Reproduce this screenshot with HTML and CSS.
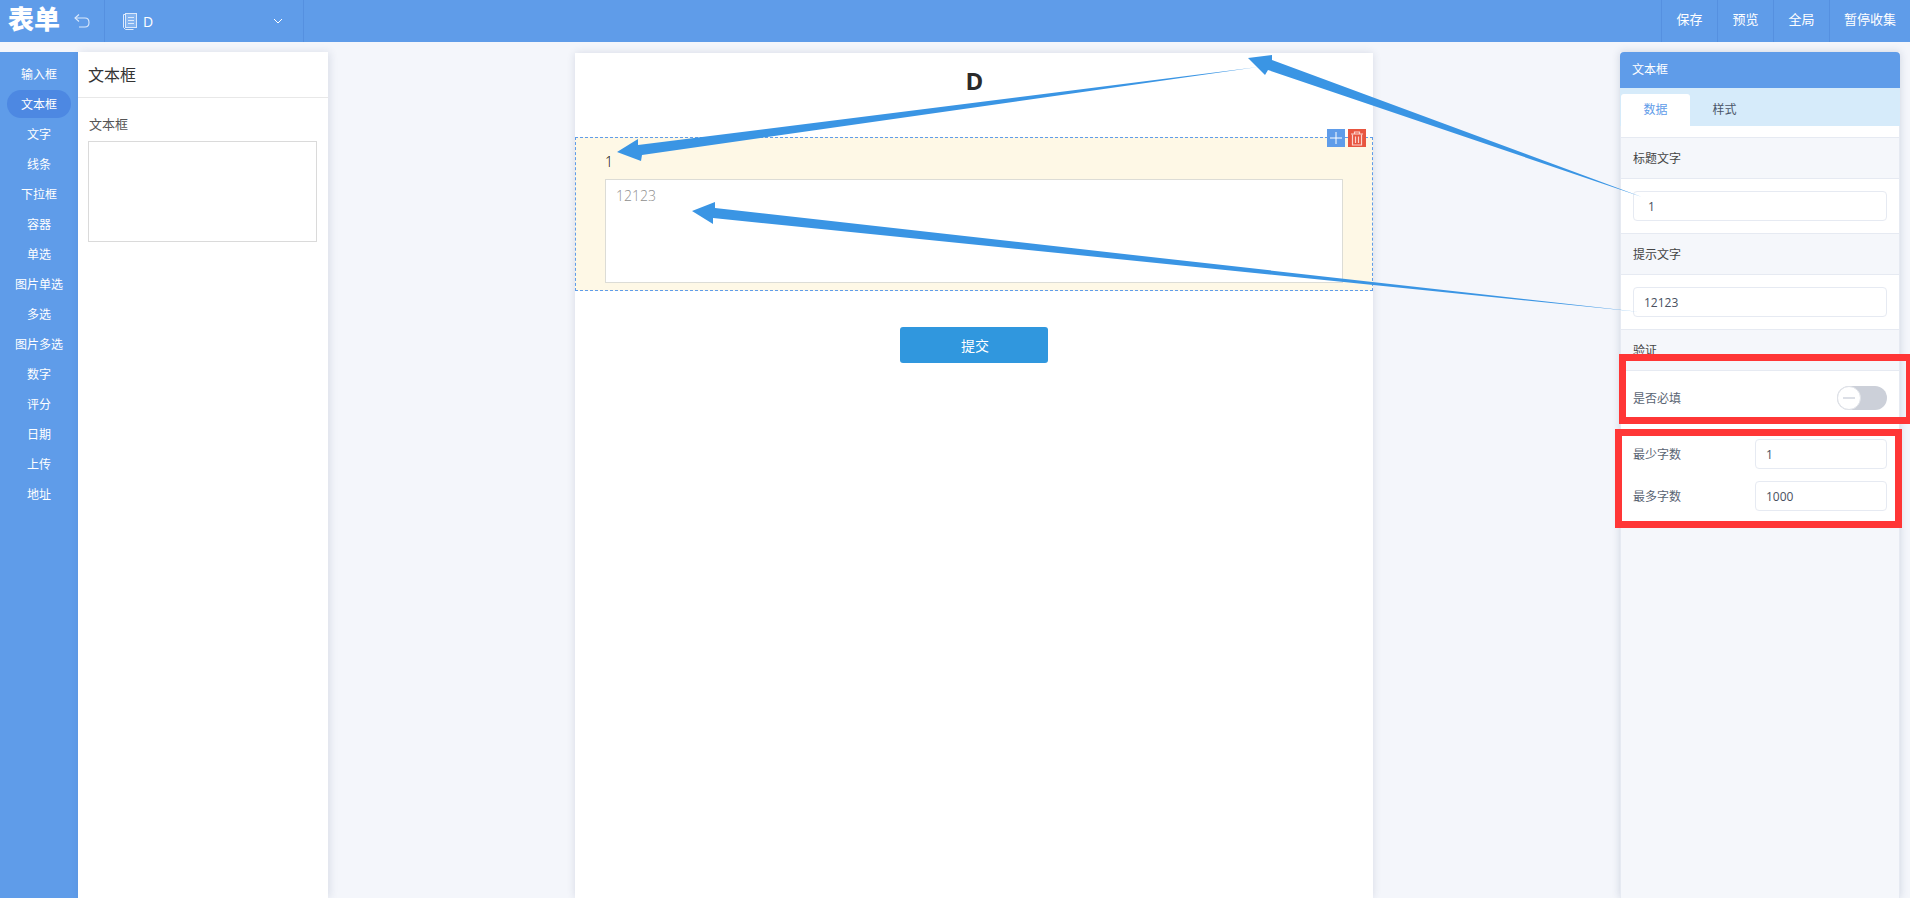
FILE: index.html
```html
<!DOCTYPE html>
<html lang="zh-CN">
<head>
    <meta charset="UTF-8">
    <meta name="viewport" content="width=device-width, initial-scale=1.0">
    <title>表单</title>
    <link rel="stylesheet" href="styles.css">
</head>
<body>
    <!-- Top bar -->
    <header class="topbar">
        <div class="logo">表单</div>
        <div class="undo">
            <svg width="16" height="14" viewBox="0 0 16 14" fill="none" stroke="#dce9fb" stroke-width="1.1">
                <path d="M5 .5 1 4l4 3.5"/>
                <path d="M1 4h10c2.500 0 4 1.800 4 4.500S13.500 13 11 13H5"/>
            </svg>
        </div>
        <div class="form-select">
            <svg class="doc-icon" width="15" height="17" viewBox="0 0 15 17" fill="none" stroke="#dce9fb">
                <path d="M3 1.500h-1.500v13l2 2h8"/>
                <rect x="3.500" y=".5" width="11" height="14" fill="#84b4f0"/>
                <path d="M6 4.500h6M6 7.500h6M6 10.500h6"/>
            </svg>
            <span class="form-name">D</span>
            <svg class="chevron" width="10" height="6" viewBox="0 0 10 6" fill="none" stroke="#fff">
                <path d="M1 1l4 4 4-4"/>
            </svg>
        </div>
        <nav class="top-actions">
            <a class="top-btn">保存</a>
            <a class="top-btn">预览</a>
            <a class="top-btn">全局</a>
            <a class="top-btn top-btn-wide">暂停收集</a>
        </nav>
    </header>

    <main class="workspace">
        <!-- Component type rail -->
        <ul class="rail">
            <li class="rail-item">输入框</li>
            <li class="rail-item active">文本框</li>
            <li class="rail-item">文字</li>
            <li class="rail-item">线条</li>
            <li class="rail-item">下拉框</li>
            <li class="rail-item">容器</li>
            <li class="rail-item">单选</li>
            <li class="rail-item">图片单选</li>
            <li class="rail-item">多选</li>
            <li class="rail-item">图片多选</li>
            <li class="rail-item">数字</li>
            <li class="rail-item">评分</li>
            <li class="rail-item">日期</li>
            <li class="rail-item">上传</li>
            <li class="rail-item">地址</li>
        </ul>

        <!-- Component preview panel -->
        <section class="preview-panel">
            <h3 class="preview-title">文本框</h3>
            <div class="preview-body">
                <div class="preview-label">文本框</div>
                <div class="preview-box"></div>
            </div>
        </section>

        <!-- Form canvas -->
        <div class="canvas-wrap">
            <section class="canvas">
                <h1 class="form-title">D</h1>
                <div class="field">
                    <div class="field-tools">
                        <span class="tool tool-add">
                            <svg width="12" height="12" viewBox="0 0 12 12" stroke="#fff" stroke-width="1">
                                <path d="M6 0v12M0 6h12"/>
                            </svg>
                        </span>
                        <span class="tool tool-del">
                            <svg width="14" height="15" viewBox="0 0 14 15" fill="none" stroke="#fbd5cf" stroke-width="1.200">
                                <path d="M1 3h12M4.500 3V1h5v2"/>
                                <path d="M2.500 3.500v10.500h9V3.500"/>
                                <path d="M5.500 5.500v6.500M8.500 5.500v6.500"/>
                            </svg>
                        </span>
                    </div>
                    <div class="field-label">1</div>
                    <div class="field-area">12123</div>
                </div>
                <button class="submit-btn">提交</button>
            </section>
        </div>

        <!-- Settings panel -->
        <aside class="settings">
            <div class="settings-title">文本框</div>
            <div class="settings-tabs">
                <span class="tab active">数据</span>
                <span class="tab">样式</span>
            </div>
            <div class="settings-body">
                <div class="section-head">标题文字</div>
                <div class="section-content">
                    <input class="text-input input-title" type="text" value="1">
                </div>
                <div class="section-head">提示文字</div>
                <div class="section-content">
                    <input class="text-input" type="text" value="12123">
                </div>
                <div class="section-head">验证</div>
                <div class="rules">
                    <div class="rule-row">
                        <span class="rule-label">是否必填</span>
                        <span class="switch"><span class="knob"></span></span>
                    </div>
                    <div class="rule-row rule-count">
                        <span class="rule-label">最少字数</span>
                        <input class="text-input count-input" type="text" value="1">
                    </div>
                    <div class="rule-row rule-count">
                        <span class="rule-label">最多字数</span>
                        <input class="text-input count-input" type="text" value="1000">
                    </div>
                </div>
            </div>
        </aside>
    </main>

    <!-- Annotations drawn over the screenshot -->
    <svg class="annotations" width="1910" height="898" viewBox="0 0 1910 898">
        <g fill="#3a95e4">
            <polygon points="617,152 638,139 638,145 1258,67 642,155 641,161"/>
            <polygon points="1248,58 1272,55 1272,60 1642,197 1268,70 1265,75"/>
            <polygon points="692,211 715,202 715,208 1640,312 713,218 713,224"/>
        </g>
        <g fill="none" stroke="#ff3636" stroke-width="7">
            <rect x="1622.500" y="357.500" width="287" height="63"/>
            <rect x="1618.500" y="432.500" width="280" height="92"/>
        </g>
    </svg>
</body>
</html>
```

FILE: styles.css
```css
/* General page styles */
* {
    box-sizing: border-box;
}

body {
    margin: 0;
    height: 100vh;
    overflow: hidden;
    display: flex;
    flex-direction: column;
    background-color: #f4f6fb;
    font-family: "Open Sans", "Noto Sans CJK SC", sans-serif;
    color: #333;
}

/* Top bar */
.topbar {
    height: 42px;
    flex-shrink: 0;
    display: flex;
    align-items: stretch;
    background-color: #5f9ce9;
    color: #fff;
}

.logo {
    width: 74px;
    padding-left: 8px;
    font-size: 26px;
    font-weight: 900;
    line-height: 38px;
    white-space: nowrap;
}

.undo {
    width: 30px;
    padding-top: 11px;
}

.form-select {
    width: 200px;
    display: flex;
    align-items: center;
    padding: 0 20px 0 17px;
    border-left: 1px solid #5590e0;
    border-right: 1px solid #5590e0;
}

.form-name {
    flex: 1;
    margin-left: 6px;
    font-size: 14px;
}

.top-actions {
    margin-left: auto;
    display: flex;
}

.top-btn {
    width: 56px;
    border-left: 1px solid #5590e0;
    font-size: 13px;
    line-height: 38px;
    text-align: center;
}

.top-btn-wide {
    width: 81px;
}

/* Main area */
.workspace {
    flex: 1;
    display: flex;
    padding-top: 10px;
    min-height: 0;
}

/* Component type rail */
.rail {
    width: 78px;
    flex-shrink: 0;
    margin: 0;
    padding: 8px 0 0;
    list-style: none;
    background-color: #5f9ce9;
}

.rail-item {
    height: 28px;
    margin: 0 7px 2px;
    border-radius: 14px;
    font-size: 12px;
    line-height: 29px;
    text-align: center;
    color: #fff;
    white-space: nowrap;
}

.rail-item.active {
    background-color: #4d88e2;
}

/* Component preview panel */
.preview-panel {
    width: 250px;
    flex-shrink: 0;
    background: #fff;
    box-shadow: 2px 0 8px rgba(40, 60, 100, 0.12);
}

.preview-title {
    height: 46px;
    margin: 0;
    padding-left: 10px;
    border-bottom: 1px solid #e8e8e8;
    font-size: 16px;
    font-weight: 400;
    line-height: 46px;
    color: #333;
}

.preview-body {
    padding: 15px 10px;
}

.preview-label {
    padding-left: 1px;
    margin-bottom: 6px;
    font-size: 13px;
    line-height: 22px;
    color: #555;
}

.preview-box {
    width: 229px;
    height: 101px;
    border: 1px solid #dadada;
}

/* Form canvas */
.canvas-wrap {
    flex: 1;
    display: flex;
    justify-content: center;
    padding-top: 1px;
    min-width: 0;
}

.canvas {
    width: 798px;
    background: #fff;
    text-align: center;
    box-shadow: 0 0 8px rgba(40, 60, 100, 0.14);
}

.form-title {
    height: 84px;
    margin: 0;
    padding-left: 1px;
    font-size: 24px;
    font-weight: 700;
    line-height: 56px;
    color: #2b2b2b;
}

.field {
    position: relative;
    height: 154px;
    padding: 14px 29px 0 29px;
    border: 1px dashed #5f9ce9;
    background-color: #fef8e6;
    text-align: left;
}

.field-label {
    height: 20px;
    margin-bottom: 7px;
    font-size: 14px;
    font-weight: 300;
    line-height: 20px;
    color: #000;
}

.field-area {
    height: 104px;
    padding: 6px 10px;
    border: 1px solid #dcdcd6;
    background: #fff;
    font-size: 14px;
    font-weight: 300;
    line-height: 20px;
    color: #8f8f8f;
}

.field-tools {
    position: absolute;
    top: -9px;
    right: 6px;
    display: flex;
    gap: 3px;
}

.tool {
    width: 18px;
    height: 18px;
    display: flex;
    align-items: center;
    justify-content: center;
}

.tool-add {
    background-color: #5f9ce9;
}

.tool-del {
    background-color: #e8553f;
}

.submit-btn {
    display: block;
    width: 148px;
    height: 36px;
    margin: 36px auto 0;
    padding-left: 8px;
    border: none;
    border-radius: 3px;
    background-color: #3097de;
    color: #fff;
    font-family: inherit;
    font-size: 14px;
}

/* Settings panel */
.settings {
    width: 280px;
    flex-shrink: 0;
    margin-right: 10px;
    display: flex;
    flex-direction: column;
    box-shadow: 0 0 8px rgba(40, 60, 100, 0.18);
}

.settings-title {
    height: 36px;
    padding-left: 12px;
    border-radius: 4px 4px 0 0;
    background-color: #5f9ce9;
    color: #fff;
    font-size: 12px;
    line-height: 36px;
}

.settings-tabs {
    height: 38px;
    display: flex;
    align-items: flex-end;
    padding-left: 1px;
    background-color: #d6ebfa;
}

.tab {
    width: 69px;
    height: 32px;
    font-size: 12px;
    line-height: 32px;
    text-align: center;
    color: #4a5568;
}

.tab.active {
    border-radius: 3px 3px 0 0;
    background: #fff;
    color: #5f9ce9;
}

.settings-body {
    flex: 1;
    padding-top: 11px;
    border-left: 1px solid #e6eaf2;
    border-right: 1px solid #e6eaf2;
    background-color: #f5f7fb;
}

.settings-body > :first-child {
    box-shadow: 0 -11px 0 #fff;
}

.section-head {
    height: 42px;
    padding-left: 12px;
    border-top: 1px solid #e6eaf2;
    border-bottom: 1px solid #e6eaf2;
    background-color: #f5f7fb;
    font-size: 12px;
    line-height: 41px;
    color: #444;
}

.section-content {
    height: 54px;
    padding: 12px 12px 0;
    background: #fff;
}

.text-input {
    display: block;
    width: 100%;
    height: 30px;
    padding: 0 10px;
    border: 1px solid #e6eaf2;
    border-radius: 4px;
    outline: none;
    background: #fff;
    font-family: inherit;
    font-size: 12px;
    color: #495060;
}

.input-title {
    padding-left: 14px;
}

/* Validation rules */
.rules {
    height: 155px;
    padding: 15px 12px 0;
    background: #fff;
}

.rule-row {
    display: flex;
    align-items: center;
    justify-content: space-between;
    height: 24px;
}

.rule-count {
    height: 30px;
}

.rule-row + .rule-count {
    margin-top: 29px;
}

.rule-count + .rule-count {
    margin-top: 12px;
}

.rule-label {
    font-size: 12px;
    color: #5a6473;
}

.count-input {
    width: 132px;
}

/* Required switch */
.switch {
    width: 50px;
    height: 24px;
    border-radius: 12px;
    background-color: #ccd0d9;
}

.knob {
    display: flex;
    align-items: center;
    justify-content: center;
    width: 24px;
    height: 24px;
    border: 1px solid #dfe2e8;
    border-radius: 50%;
    background: #fff;
}

.knob:before {
    content: "";
    width: 12px;
    height: 2px;
    background-color: #dcdfe6;
}

/* Annotations layer */
.annotations {
    position: absolute;
    top: 0;
    left: 0;
    pointer-events: none;
}
```
